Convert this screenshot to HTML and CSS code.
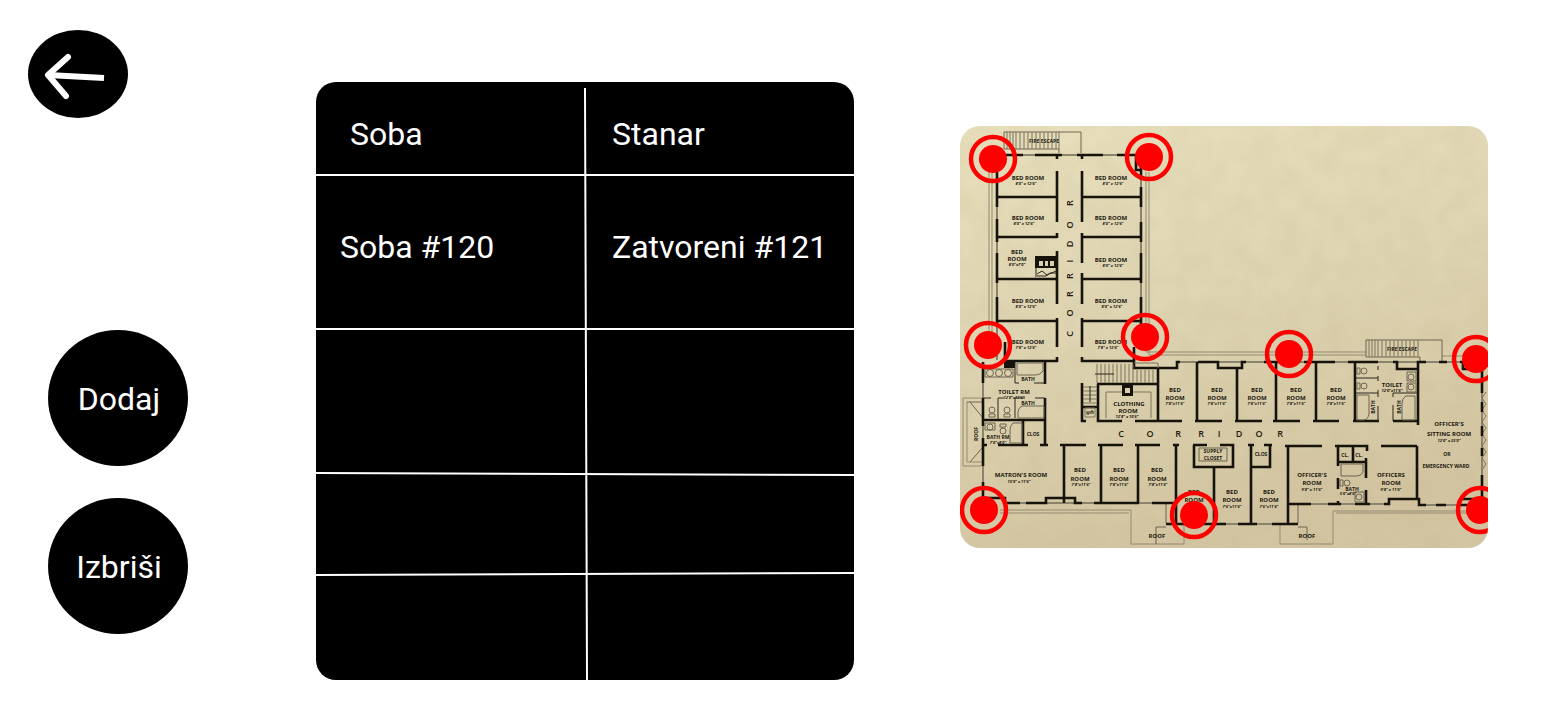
FILE: index.html
```
<!DOCTYPE html>
<html lang="hr">
<head>
<meta charset="utf-8">
<meta name="viewport" content="width=device-width, initial-scale=1">
<title>Sobe</title>
<link rel="stylesheet" href="styles.css">
</head>
<body>
<main class="page">
  <nav class="sidebar">
    <button class="round back" type="button" aria-label="Natrag">
      <svg viewBox="0 0 100 88" aria-hidden="true">
        <path d="M20 45L76 48" stroke-width="6"/>
        <path d="M40 27L20 45L38 66" stroke-width="6" stroke-linecap="round" stroke-linejoin="round"/>
      </svg>
    </button>
    <div class="actions">
      <button class="round action" type="button">Dodaj</button>
      <button class="round action" type="button">Izbriši</button>
    </div>
  </nav>

  <section class="rooms">
    <table class="rooms-table">
      <thead>
        <tr class="row-head"><th scope="col">Soba</th><th scope="col">Stanar</th></tr>
      </thead>
      <tbody>
        <tr class="row-first"><td>Soba #120</td><td>Zatvoreni #121</td></tr>
        <tr class="row-second"><td></td><td></td></tr>
        <tr class="row-third"><td></td><td></td></tr>
        <tr class="row-last"><td></td><td></td></tr>
      </tbody>
    </table>
    <svg class="rules" viewBox="0 0 538 598" preserveAspectRatio="none" aria-hidden="true">
      <path d="M269 6L271 598M0 93H538M0 247H538M0 391L538 393M0 493L538 491"/>
    </svg>
  </section>

  <svg class="plan" viewBox="960 126 528 422" role="img" aria-label="Tlocrt">
    <defs>
      <linearGradient id="paper" x1="0" y1="0" x2="0.3" y2="1">
        <stop offset="0" stop-color="#e8dfbc"/>
        <stop offset="0.5" stop-color="#dfd5b3"/>
        <stop offset="1" stop-color="#d3c5a1"/>
      </linearGradient>
      <filter id="grain" x="0" y="0" width="1" height="1">
        <feTurbulence type="fractalNoise" baseFrequency="0.04" numOctaves="4" seed="4"/>
        <feColorMatrix values="0 0 0 0 0.45  0 0 0 0 0.38  0 0 0 0 0.2  0.2 0 0 0 -0.05"/>
      </filter>
      <g id="marker">
        <circle r="22" fill="none" stroke="#f00" stroke-width="4.5"/>
        <circle r="14" fill="#f00"/>
      </g>
      <g id="toilet" class="thin">
        <circle r="3"/><path d="M-3 4H3V7H-3Z"/>
      </g>
    </defs>
    <rect x="960" y="126" width="528" height="422" fill="url(#paper)"/>
    <rect x="960" y="126" width="528" height="422" filter="url(#grain)"/>

    <!-- gutters and roof edges -->
    <path class="gutter" d="M989 170V340M992 170V340M1146 172V352H1366M1149 172V355H1366M1442 356H1482M1000 510H1131V544H1184V524M1000 513H1129M1280 524V544H1333V511H1482M1336 513H1482M963 398H983M963 398V466H983M967 402V462H983"/>
    <path class="thin" d="M967 402H983M970 402L983 418M970 462L983 447M1166 504V523M1156 544V527H1166M1298 505V523M1298 527H1307V540"/>

    <!-- fire escapes -->
    <path class="thin" d="M1004 149V132H1081V153M1004 149H1059V153M1366 357V340H1442V362M1366 357H1420V362"/>
    <path class="hatch" d="M1007 132V149M1010 132V149M1013 132V149M1016 132V149M1020 132V149M1024 132V149M1028 132V149M1032 132V149M1036 132V149M1040 132V149M1044 132V149M1048 132V149M1052 132V149M1056 132V149M1059 132V149M1369 340V357M1372 340V357M1375 340V357M1378 340V357M1382 340V357M1386 340V357M1390 340V357M1394 340V357M1398 340V357M1402 340V357M1406 340V357M1410 340V357M1414 340V357M1418 340V357"/>

    <!-- windows -->
    <path class="window" d="M1023 155H1036M1062 155H1077M1103 155H1118M997 171V360M1141 171V325M983 368V500M1180 362H1440M1446 362H1482M1482 362V506M1005 503H1176M1176 524H1290M1289 504H1389M1419 505H1482"/>
    <path class="hatch" d="M1486 392L1482 398L1486 404L1482 410L1486 416L1482 422L1486 428L1482 434L1486 440L1482 446L1486 452L1482 458L1486 464L1482 470"/>

    <!-- north wing -->
    <path class="wall" d="M997 155H1023M1035 155H1062M1077 155H1103M1117 155H1141M1057 155V159M1082 155V159M997 155V207M997 219V242M997 253V283M997 297V323M1005 342V361M1141 155V180M1136 155V170H1141M1141 187V207M1141 222V242M1141 253V283M1141 297V325
      M1057 171V222M1057 233V238M1057 251V304M1057 318V347M1057 357V361H1005M1082 171V222M1082 233V263M1082 273V304M1082 318V347M1082 357V361H1134
      M997 197H1057M997 237H1057M997 279H1057M997 321H1057M1082 197H1141M1082 237H1141M1082 279H1141M1082 321H1141"/>
    <path class="solid" d="M1035 256H1057V268H1035ZM1004 361H1015V368H1004Z"/>
    <path class="paper" d="M1039 261H1043V266H1039ZM1045 261H1048V266H1045ZM1050 261H1054V266H1050Z"/>
    <path class="thin dark" d="M1036 268V277M1037 274L1042 271L1047 275L1056 271M1037 276H1046L1050 273H1057"/>

    <!-- west wing -->
    <path class="wall" d="M983 362V383M983 398V426M983 438V466M983 482V498H1005V503H1020M1026 503H1046V498H1075V503H1082M1094 503H1139M1152 503H1176
      M1045 362V384M1045 398V445M983 420H1045M1023 420V445M983 445H987M998 445H1028M1040 445H1048M1060 445H1086M1064 445V503M1101 445V503M1098 445H1123M1135 445H1160M1138 445V503"/>
    <path class="thin dark" d="M998 398V420M1015 362V383H1019M1034 383H1045M983 398H991M998 398H1004M1015 418V398H1025M1035 398H1045"/>
    <path class="thin" d="M1017 363H1043V371Q1040 375 1036 375H1017ZM1044 406H1022Q1018 408 1018 412V418H1044ZM1022 423H1013Q1010 426 1010 430V443H1022ZM985 423H995V430H985ZM985 369H1013V377H985Z"/>
    <g class="thin"><circle cx="990" cy="373" r="3.5"/><circle cx="999" cy="373" r="3.5"/><circle cx="1008" cy="373" r="3.5"/><circle cx="990" cy="427" r="3"/></g>
    <use href="#toilet" x="992" y="410"/><use href="#toilet" x="1007" y="410"/>
    <use href="#toilet" transform="translate(1003 431) rotate(180)"/>

    <!-- stairs and clothing room -->
    <path class="wall" d="M1134 347V368H1177V362H1180M1198 362H1218V368H1242V362H1246M1264 362H1276M1082 383V421H1086M1097 384H1158M1098 384V421H1122M1135 421H1182M1158 368V421M1082 407H1098"/>
    <path class="hatch" d="M1097 364V383M1101 364V383M1105 364V383M1109 364V383M1113 364V383M1117 364V383M1121 364V383M1125 364V383M1129 364V383M1133 364V383M1137 370V383M1141 370V383M1145 370V383M1149 370V383M1153 370V383M1083 387H1097M1083 391H1097M1083 395H1097M1083 399H1097M1083 403H1097M1106 418V392H1122M1133 392H1151V418M1085 408H1095V417H1085ZM1134 363H1158V368"/>
    <path class="thin dark" d="M1095 374H1114M1090 386V402M1087 411V414H1089V411M1091 414V411H1093V414"/>
    <path class="solid" d="M1122 385H1133V396H1122Z"/><path class="paper" d="M1125 388H1130V393H1125Z"/>

    <!-- rooms north of the corridor -->
    <path class="wall" d="M1197 362V421M1237 368V421M1276 362V421M1316 362V421M1355 362V421M1195 421H1222M1235 421H1262M1273 421H1300M1313 421H1339M1353 421H1379M1393 421H1417M1276 362H1294M1304 362H1335M1348 362H1378M1393 362H1397V369H1418V362H1426M1418 369V425M1439 362H1447M1460 362H1463V369H1482M1482 362V393M1482 402V412M1482 426V436"/>
    <path class="thin dark" d="M1356 378H1378M1356 393H1378M1378 366V370M1378 376V381M1378 390V397M1378 406V421M1393 421V405M1393 397V393H1418"/>
    <path class="thin" d="M1357 395H1369V414Q1368 420 1363 420H1357ZM1415 396H1406Q1402 398 1402 403V420H1415ZM1407 372H1416V381H1407ZM1407 383H1416V392H1407Z"/>
    <g class="thin"><circle cx="1411" cy="377" r="3"/><circle cx="1411" cy="387" r="3"/></g>
    <use href="#toilet" transform="translate(1364 371) rotate(90)"/><use href="#toilet" transform="translate(1364 386) rotate(90)"/>

    <!-- rooms south of the corridor -->
    <path class="wall" d="M1173 445H1179M1176 445V524H1226M1166 524H1176M1238 524H1257M1272 524H1298M1193 445H1207M1220 445H1233V467H1194V445M1214 467V524M1248 445H1254M1251 445V524M1251 467H1270V445M1264 445H1272M1288 446V524M1285 446H1322M1335 446H1367V451M1338 446V466M1338 478V489M1353 446V462M1338 462H1366M1366 458V478M1366 490V504M1381 446H1417M1417 446V499
      M1289 504H1311M1328 504H1341M1355 504H1370M1384 504H1389V499H1419V505H1426M1436 505H1446M1458 505H1482M1482 475V505M1460 499H1482M1338 501V504M1482 448V456"/>
    <path class="thin" d="M1199 448H1227V461H1199ZM1341 464H1363V472Q1361 476 1357 476H1341ZM1355 492H1364V502H1355Z"/>
    <circle class="thin" cx="1359" cy="497" r="3"/>
    <use href="#toilet" transform="translate(1347 483) rotate(90)"/>

    <g class="label">
      <text x="1044" y="143" class="tiny">FIRE ESCAPE</text><text x="1402" y="351" class="tiny">FIRE ESCAPE</text>
      <text x="1028" y="180">BED ROOM</text><text x="1111" y="180">BED ROOM</text>
      <text x="1028" y="220">BED ROOM</text><text x="1111" y="220">BED ROOM</text>
      <text x="1017" y="254">BED</text><text x="1017" y="261">ROOM</text><text x="1111" y="262">BED ROOM</text>
      <text x="1028" y="303">BED ROOM</text><text x="1111" y="303">BED ROOM</text>
      <text x="1028" y="344">BED ROOM</text><text x="1111" y="344">BED ROOM</text>
      <text x="1014" y="394">TOILET RM</text><text x="1028" y="381" class="tiny">BATH</text><text x="1028" y="405" class="tiny">BATH</text>
      <text x="998" y="439" class="tiny">BATH RM</text><text x="1033" y="436" class="tiny">CLOS</text>
      <text x="1129" y="406">CLOTHING</text><text x="1128" y="413">ROOM</text>
      <text x="1175" y="392">BED</text><text x="1175" y="400">ROOM</text>
      <text x="1217" y="392">BED</text><text x="1217" y="400">ROOM</text>
      <text x="1257" y="392">BED</text><text x="1257" y="400">ROOM</text>
      <text x="1296" y="392">BED</text><text x="1296" y="400">ROOM</text>
      <text x="1336" y="392">BED</text><text x="1336" y="400">ROOM</text>
      <text x="1392" y="387">TOILET</text>
      <text x="1449" y="426">OFFICER'S</text><text x="1449" y="436">SITTING ROOM</text>
      <text x="1447" y="456" class="tiny">OR</text><text x="1446" y="468" class="tiny">EMERGENCY WARD</text>
      <text x="1021" y="477">MATRON'S ROOM</text>
      <text x="1080" y="472">BED</text><text x="1080" y="481">ROOM</text>
      <text x="1119" y="472">BED</text><text x="1119" y="481">ROOM</text>
      <text x="1157" y="472">BED</text><text x="1157" y="481">ROOM</text>
      <text x="1194" y="494">BED</text><text x="1194" y="502">ROOM</text>
      <text x="1232" y="494">BED</text><text x="1232" y="502">ROOM</text>
      <text x="1269" y="494">BED</text><text x="1269" y="502">ROOM</text>
      <text x="1213" y="453" class="tiny">SUPPLY</text><text x="1213" y="460" class="tiny">CLOSET</text><text x="1261" y="456" class="tiny">CLOS</text>
      <text x="1345" y="457" class="tiny">CL.</text><text x="1359" y="457" class="tiny">CL.</text><text x="1352" y="491" class="tiny">BATH</text>
      <text x="1312" y="477">OFFICER'S</text><text x="1312" y="485">ROOM</text>
      <text x="1391" y="477">OFFICERS</text><text x="1391" y="485">ROOM</text>
      <text x="1157" y="538">ROOF</text><text x="1307" y="538">ROOF</text>
      <text transform="translate(978 434) rotate(-90)" class="tiny">ROOF</text>
      <text transform="translate(1375 407) rotate(-90)" class="tiny">BATH</text>
      <text transform="translate(1401 407) rotate(-90)" class="tiny">BATH</text>
    </g>
    <g class="label size">
      <text x="1026" y="185">8'0" x 12'6"</text><text x="1113" y="185">8'0" x 12'6"</text>
      <text x="1024" y="225">8'0" x 12'6"</text><text x="1113" y="225">8'0" x 12'6"</text>
      <text x="1017" y="266">8'0"x7'0"</text><text x="1113" y="267">8'0" x 12'6"</text>
      <text x="1026" y="308">8'0" x 12'6"</text><text x="1112" y="308">8'0" x 12'6"</text>
      <text x="1026" y="349">7'8" x 12'6"</text><text x="1108" y="349">7'8" x 12'6"</text>
      <text x="1014" y="399">12'0"x11'6"</text><text x="998" y="444">7'0"x8'0"</text><text x="1127" y="418">12'8" x 10'6"</text>
      <text x="1175" y="405">7'8"x11'6"</text><text x="1217" y="405">7'8"x11'6"</text><text x="1257" y="405">7'8"x11'6"</text><text x="1296" y="405">7'8"x11'6"</text><text x="1336" y="405">7'8"x11'6"</text>
      <text x="1392" y="392">12'0"x11'6"</text><text x="1449" y="442">12'0" x 25'0"</text>
      <text x="1019" y="483">15'0" x 11'6"</text><text x="1081" y="486">7'8"x11'6"</text><text x="1119" y="486">7'8"x11'6"</text><text x="1158" y="486">7'8"x11'6"</text>
      <text x="1232" y="508">7'6"x11'6"</text><text x="1269" y="508">7'6"x11'6"</text>
      <text x="1312" y="491">9'8" x 11'6"</text><text x="1391" y="491">9'8" x 11'6"</text><text x="1348" y="495">5'6"x8'0"</text>
    </g>
    <g class="label corridor">
      <text x="1121" y="437">C</text><text x="1150" y="437">O</text><text x="1178" y="437">R</text><text x="1201" y="437">R</text><text x="1219" y="437">I</text><text x="1239" y="437">D</text><text x="1259" y="437">O</text><text x="1280" y="437">R</text>
      <text transform="translate(1073 334) rotate(-90)">C</text><text transform="translate(1073 313) rotate(-90)">O</text><text transform="translate(1073 294) rotate(-90)">R</text><text transform="translate(1073 276) rotate(-90)">R</text><text transform="translate(1073 261) rotate(-90)">I</text><text transform="translate(1073 244) rotate(-90)">D</text><text transform="translate(1073 225) rotate(-90)">O</text><text transform="translate(1073 203) rotate(-90)">R</text>
    </g>

    <use href="#marker" x="993" y="159"/><use href="#marker" x="1149" y="157"/>
    <use href="#marker" x="988" y="345"/><use href="#marker" x="1145" y="337"/>
    <use href="#marker" x="1289" y="354"/><use href="#marker" x="1476" y="359"/>
    <use href="#marker" x="984" y="510"/><use href="#marker" x="1194" y="515"/>
    <use href="#marker" x="1480" y="510"/>
  </svg>
</main>
</body>
</html>
```

FILE: styles.css
```
* { box-sizing: border-box; }

body {
  margin: 0;
  background: #fff;
  font-family: Roboto, sans-serif;
  font-size: 32px;
}

.page {
  display: grid;
  grid-template-columns: 182px minmax(0, 538fr) minmax(0, 528fr);
  column-gap: 106px;
  align-items: start;
  padding: 30px 64px 42px 28px;
}

.round {
  display: block;
  padding: 0;
  border: 0;
  border-radius: 50%;
  background: #000;
  color: #fff;
  font: inherit;
  cursor: pointer;
}

.back { width: 100px; height: 88px; }
.back svg { display: block; width: 100%; }
.back path { fill: none; stroke: #fff; }

.actions {
  display: grid;
  gap: 32px;
  padding: 212px 0 0 20px;
}
.action {
  width: 140px;
  height: 136px;
  padding: 2px 0 0 2px;
}

.rooms {
  position: relative;
  margin-top: 52px;
  overflow: hidden;
  border-radius: 20px;
  background: #000;
  color: #fff;
}
.rooms-table {
  width: 100%;
  border-collapse: collapse;
  table-layout: fixed;
}
.rooms-table th,
.rooms-table td {
  padding: 0 0 10px 24px;
  font-weight: 400;
  text-align: left;
  white-space: nowrap;
}
.rooms-table th { padding: 10px 0 0 34px; }
.rooms-table th + th,
.rooms-table td + td { padding-left: 27px; }
.row-head { height: 93px; }
.row-first { height: 154px; }
.row-second { height: 145px; }
.row-third { height: 100px; }
.row-last { height: 106px; }

.rules {
  position: absolute;
  inset: 0;
  width: 100%;
  height: 100%;
  pointer-events: none;
}
.rules path { fill: none; stroke: #fff; stroke-width: 2; }

.plan {
  display: block;
  width: 100%;
  margin-top: 96px;
  border-radius: 20px;
}
.wall { fill: none; stroke: #15130c; stroke-width: 2.6; }
.solid { fill: #15130c; }
.paper { fill: #d9cfac; }
.window { fill: none; stroke: #8b846c; stroke-width: 2; }
.gutter { fill: none; stroke: #938b73; stroke-width: 1; }
.thin { fill: none; stroke: #6c6550; stroke-width: 1; }
.dark { stroke: #2b271b; }
.hatch { fill: none; stroke: #7c745c; stroke-width: 1; }

.label {
  fill: #1c190f;
  font-family: "Open Sans", sans-serif;
  font-size: 6px;
  font-weight: 700;
  text-anchor: middle;
}
.label .tiny { font-size: 5px; }
.size { font-size: 4px; font-style: italic; }
.corridor { font-size: 9px; font-weight: 600; }
```
